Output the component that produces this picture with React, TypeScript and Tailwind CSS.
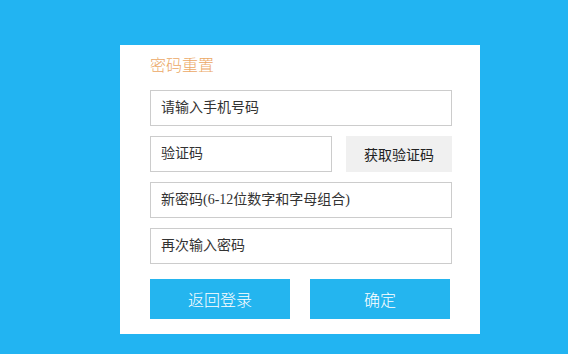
import React from "react";

const font = "font-['Liberation_Serif','Noto_Sans_CJK_SC',serif]";

const Field = ({ placeholder, className = "" }: { placeholder: string; className?: string }) => (
  <input
    type="text"
    placeholder={placeholder}
    className={`h-[36px] border border-[#cccccc] bg-white px-[10px] text-[14px] text-[#333] placeholder:text-[#333] outline-none ${font} ${className}`}
  />
);

const App: React.FC = () => {
  return (
    <div className="h-[354px] w-[568px] bg-[#22b4f2] pt-[45px]">
      <div className="ml-[120px] flex h-[289px] w-[360px] flex-col bg-white px-[30px] pb-[15px] pt-[9px]">
        <h2 className="text-[16px] leading-[20px] text-[#eba865] font-['Noto_Sans_CJK_SC',sans-serif] font-light">
          密码重置
        </h2>

        <form className="mt-[16px] flex flex-col gap-[10px]">
          <Field placeholder="请输入手机号码" className="w-[302px]" />
          <div className="flex w-[302px] items-center justify-between">
            <Field placeholder="验证码" className="w-[182px]" />
            <button
              type="button"
              className="h-[36px] w-[106px] bg-[#f0f0f0] text-[14px] text-[#222] font-['Noto_Sans_CJK_SC',sans-serif]"
            >
              获取验证码
            </button>
          </div>
          <Field placeholder="新密码(6-12位数字和字母组合)" className="w-[302px]" />
          <Field placeholder="再次输入密码" className="w-[302px]" />

          <div className="mt-[5px] flex w-[300px] justify-between">
            <button
              type="button"
              className="h-[40px] w-[140px] bg-[#24b5ef] text-[16px] text-white font-['Noto_Sans_CJK_SC',sans-serif] font-light"
            >
              返回登录
            </button>
            <button
              type="submit"
              className="h-[40px] w-[140px] bg-[#24b5ef] text-[16px] text-white font-['Noto_Sans_CJK_SC',sans-serif] font-light"
            >
              确定
            </button>
          </div>
        </form>
      </div>
    </div>
  );
};

export default App;
